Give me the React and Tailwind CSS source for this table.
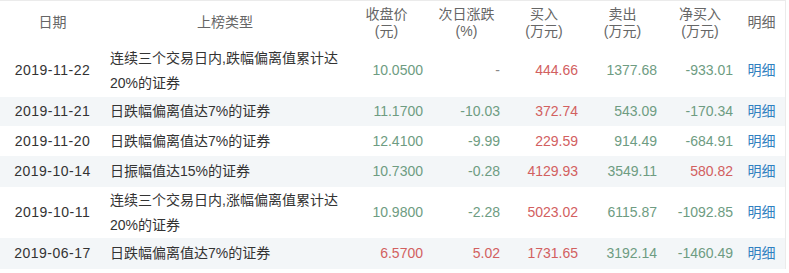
const rows = [
  { date: '2019-11-22', type: '连续三个交易日内,跌幅偏离值累计达20%的证券', close: '10.0500', closeUp: false, chg: '-', chgUp: null, buy: '444.66', sell: '1377.68', net: '-933.01', netUp: false, h: 'h-[53px]' },
  { date: '2019-11-21', type: '日跌幅偏离值达7%的证券', close: '11.1700', closeUp: false, chg: '-10.03', chgUp: false, buy: '372.74', sell: '543.09', net: '-170.34', netUp: false, h: 'h-[29px]' },
  { date: '2019-11-20', type: '日跌幅偏离值达7%的证券', close: '12.4100', closeUp: false, chg: '-9.99', chgUp: false, buy: '229.59', sell: '914.49', net: '-684.91', netUp: false, h: 'h-[30px]' },
  { date: '2019-10-14', type: '日振幅值达15%的证券', close: '10.7300', closeUp: false, chg: '-0.28', chgUp: false, buy: '4129.93', sell: '3549.11', net: '580.82', netUp: true, h: 'h-[31px]' },
  { date: '2019-10-11', type: '连续三个交易日内,涨幅偏离值累计达20%的证券', close: '10.9800', closeUp: false, chg: '-2.28', chgUp: false, buy: '5023.02', sell: '6115.87', net: '-1092.85', netUp: false, h: 'h-[51px]' },
  { date: '2019-06-17', type: '日跌幅偏离值达7%的证券', close: '6.5700', closeUp: true, chg: '5.02', chgUp: true, buy: '1731.65', sell: '3192.14', net: '-1460.49', netUp: false, h: 'h-[31px]' },
]

const cols = 'grid grid-cols-[105px_240px_83px_77px_78px_79px_76px_47px]'

function color(up) {
  if (up === null) return 'text-[#888]'
  return up ? 'text-[#d2605f]' : 'text-[#6e9c82]'
}

function Head({ children }) {
  return <div className="flex flex-col items-center justify-center leading-[17px]">{children}</div>
}

export default function App() {
  return (
    <div
      className="w-[789px] h-[273px] overflow-hidden bg-white text-[14px]"
      style={{ fontFamily: '"Liberation Sans", "Noto Sans CJK SC", sans-serif' }}
    >
      <div className="w-[786px] border-t border-r border-[#ebebeb]">
        <div className={`${cols} h-[43px] text-[#666]`}>
          <Head>日期</Head>
          <Head>上榜类型</Head>
          <Head><span>收盘价</span><span>(元)</span></Head>
          <Head><span>次日涨跌</span><span>(%)</span></Head>
          <Head><span>买入</span><span>(万元)</span></Head>
          <Head><span>卖出</span><span>(万元)</span></Head>
          <Head><span>净买入</span><span>(万元)</span></Head>
          <Head>明细</Head>
        </div>
        {rows.map((r, i) => (
          <div
            key={i}
            className={`${cols} items-center ${r.h} ${i % 2 === 1 ? 'bg-[#f3f6f8]' : 'bg-white'}`}
          >
            <div className="text-center text-[#333] tracking-[0.5px]">{r.date}</div>
            <div className="pl-[5px] pr-[4px] text-[#333] leading-[25px]">{r.type}</div>
            <div className={`text-right pr-[5px] ${color(r.closeUp)}`}>{r.close}</div>
            <div className={`text-right pr-[5px] ${color(r.chgUp)}`}>{r.chg}</div>
            <div className="text-right pr-[5px] text-[#d2605f]">{r.buy}</div>
            <div className="text-right pr-[5px] text-[#6e9c82]">{r.sell}</div>
            <div className={`text-right pr-[5px] ${color(r.netUp)}`}>{r.net}</div>
            <div className="text-center text-[#2f80c0]">明细</div>
          </div>
        ))}
      </div>
    </div>
  )
}
